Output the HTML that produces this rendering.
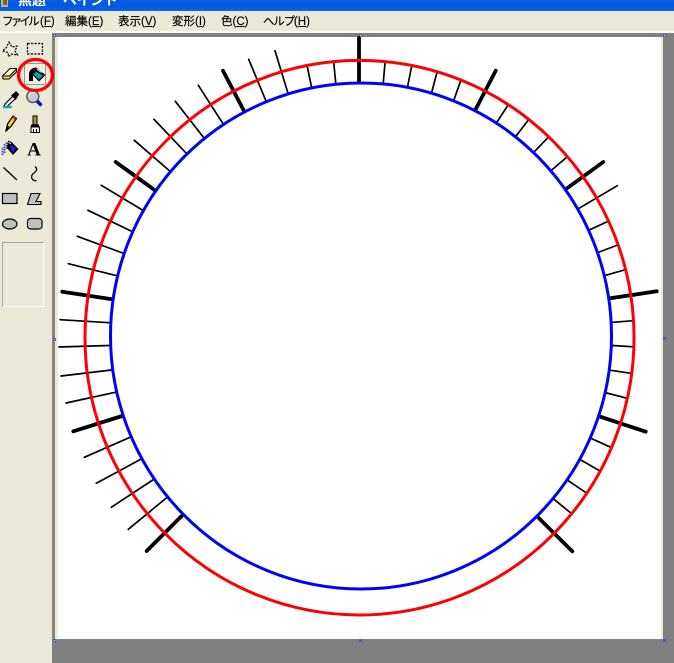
<!DOCTYPE html>
<html>
<head>
<meta charset="utf-8">
<style>
html,body{margin:0;padding:0;width:674px;height:663px;overflow:hidden;background:#808080}
#title{position:absolute;left:0;top:0;width:674px;height:11px;background:linear-gradient(#0a5be6,#0058e0 60%,#0a66f0);overflow:hidden}
#title span{position:absolute;top:-9px;color:#fff;font:bold 14px "Liberation Sans","Noto Sans CJK JP",sans-serif;line-height:18px;white-space:nowrap}
#menu{position:absolute;left:0;top:11px;width:674px;height:20px;background:#ece9d8}
#menu span{position:absolute;top:3.500px;font:11.500px/14px "Liberation Sans","Noto Sans CJK JP",sans-serif;color:#000;white-space:nowrap;-webkit-text-stroke:.15px #000}
#menu u{text-decoration:underline}
#sep{position:absolute;left:0;top:31px;width:674px;height:2px;background:#fbfaf5}
#tool{position:absolute;left:0;top:33px;width:52px;height:630px;background:#ece9d8}
#work{position:absolute;left:52px;top:33px;width:622px;height:630px;background:#808080}
#leftb{position:absolute;left:52px;top:33px;width:3px;height:606px;background:#868478}
#leftc{position:absolute;left:55px;top:37px;width:3px;height:602px;background:#ece9d8}
#canvas{position:absolute;left:58px;top:37px;width:603px;height:602px;background:#fff}
#rightc{position:absolute;left:661px;top:37px;width:2px;height:602px;background:#ece9d8}
.h{position:absolute;width:3px;height:3px;background:#fff;border:1px solid #316ac5;box-sizing:border-box}
.hb{background:#316ac5}
#opt{position:absolute;left:2px;top:242px;width:42px;height:65px;box-sizing:border-box;border:1px solid;border-color:#aca899 #fff #fff #aca899}
#btn{position:absolute;left:24px;top:63px;width:22px;height:22px;box-sizing:border-box;border:1px solid;border-color:#7f9db9;background:#f1efe4}
svg{position:absolute;left:0;top:0}
</style>
</head>
<body>
<div id="title">
<svg width="12" height="11"><rect x="1" y="0" width="7" height="7" fill="#c9b26a"/><rect x="3" y="0" width="2" height="5" fill="#3a8a3a"/><rect x="5" y="0" width="2" height="5" fill="#c23a2a"/></svg>
<span style="left:18px">無題</span><span style="left:63px;letter-spacing:-.4px">ペイント</span>
</div>
<div id="menu">
<span style="left:2px"><b style="font-weight:normal;letter-spacing:-2.800px">ファイル</b>&nbsp;(<u>F</u>)</span>
<span style="left:65px">編集(<u>E</u>)</span>
<span style="left:118px">表示(<u>V</u>)</span>
<span style="left:172px">変形(<u>I</u>)</span>
<span style="left:221px">色(<u>C</u>)</span>
<span style="left:263px"><b style="font-weight:normal;letter-spacing:-1.200px">ヘルプ</b>(<u>H</u>)</span>
</div>
<div id="sep"></div>
<div id="tool"></div>
<div id="work"></div>
<div id="leftb"></div>
<div id="leftc"></div>
<div id="canvas"></div>
<div id="rightc"></div>
<div class="h" style="left:53px;top:34px"></div>
<div class="h" style="left:359px;top:34px"></div>
<div class="h" style="left:663px;top:34px"></div>
<div class="h" style="left:53px;top:338px"></div>
<div class="h hb" style="left:663px;top:337px"></div>
<div class="h" style="left:53px;top:639px"></div>
<div class="h hb" style="left:359px;top:639px"></div>
<div class="h hb" style="left:663px;top:639px"></div>
<div id="opt"></div>
<div id="btn"></div>

<svg width="674" height="663" viewBox="0 0 674 663">
<!-- tool icons -->
<path d="M9 42L12 47L17 46L15 51L17.500 55L12 54L8.500 56.500L8 52.500L2.500 51L6.500 47.500Z" fill="none" stroke="#000" stroke-width="1.200" stroke-dasharray="2 1.200"/>
<rect x="27.500" y="43.500" width="15" height="10.500" fill="none" stroke="#000" stroke-width="1.200" stroke-dasharray="2.200 1.300"/>
<path d="M2.500 76L10 68.500H16.500V72L9 79H3Z" fill="#f7f3c8"/>
<path d="M3 79L3 76H9.500L16.500 69V72L9 79Z" fill="#e8dc60"/>
<path d="M2.500 76L10 68.500H16.500V72L9 79H3ZM3 76H9.500L16.500 69" fill="none" stroke="#000"/>
<path d="M29 81V74C29 70.500 32 68 35.500 67.500L38 69.500L33 73V81Z" fill="#000"/>
<path d="M36 67.500L45.500 75L39 81.500L31.500 74Z" fill="#000"/>
<path d="M36 71.500L43 75.500L39 79.500L33.500 74.500Z" fill="#0aa0a8"/>
<path d="M37 69.500L41.500 72.500" stroke="#fff" stroke-width="1"/>
<path d="M5 104L13 96L15.500 98.500L7 106.500H4Z" fill="#fff" stroke="#000" stroke-width="1.200"/>
<path d="M12 95.500L16 92L18.500 94.500L15.500 99Z" fill="#000" stroke="#000" stroke-width="1.200"/>
<path d="M3 107H11.500" stroke="#00b0b8" stroke-width="2.500"/>
<circle cx="32.800" cy="96.500" r="6" fill="#c4ccd0" stroke="#555" stroke-width="1.400"/>
<path d="M29.500 94.500C30.500 92.500 32 92 34 92.500" stroke="#fff" fill="none" stroke-width="1.200"/>
<path d="M37 101L41.500 105.500" stroke="#1010c0" stroke-width="3.500"/>
<path d="M6 131L7.500 124L13 116L16.500 118.500L11 126.500Z" fill="#f0d040" stroke="#000" stroke-width="1.200"/>
<path d="M12.500 117L15.500 119" stroke="#d03030" stroke-width="2"/>
<path d="M6.500 130.500L8 126" stroke="#000" stroke-width="2.200"/>
<rect x="33" y="116" width="4" height="8.500" fill="#a89820" stroke="#000"/>
<rect x="31" y="124.500" width="8" height="2.500" fill="#000"/>
<path d="M31 127H39.500V132.500H31Z" fill="#fff" stroke="#000"/>
<path d="M33.500 129V132.500M36.500 129V132.500" stroke="#000"/>
<path d="M2.500 155V147M4.500 153V144M6.500 149V142" stroke="#3030d0" stroke-width="1.700" stroke-dasharray="1.500 1"/>
<path d="M8 140.500L11.500 142L18.500 149L13 155L7 148Z" fill="#000"/>
<path d="M9.500 146.500L13 145.500L16 149L13 152.500Z" fill="#1020e0"/>
<path d="M8.500 142L11 144" stroke="#fff"/>
<text x="34" y="155.500" text-anchor="middle" font-family="Liberation Serif" font-weight="bold" font-size="19" fill="#000">A</text>
<path d="M3.500 167.500L17 180" stroke="#000" stroke-width="1.300" fill="none"/>
<path d="M35 166.500C38 169 36.500 171 34 173C31 175 31 178 33 180C34 180.500 35 181 36.500 180.500" stroke="#000" stroke-width="1.300" fill="none"/>
<rect x="2.500" y="193.500" width="14.500" height="10" fill="#c0c0c0" stroke="#000" stroke-width="1.200"/>
<path d="M31 193.500H40L36 201.500H41V204.500H27.500Z" fill="#c0c0c0" stroke="#000" stroke-width="1.100"/>
<ellipse cx="9.750" cy="224" rx="7.250" ry="5" fill="#c0c0c0" stroke="#000" stroke-width="1.200"/>
<rect x="27.500" y="218.500" width="14.500" height="10.500" rx="3" fill="#c0c0c0" stroke="#000" stroke-width="1.200"/>

<!-- red highlight ring -->
<ellipse cx="35.500" cy="75" rx="17" ry="15.500" fill="none" stroke="#f00" stroke-width="3.300"/>

<!-- drawing -->
<g stroke="#000" stroke-linecap="round" fill="none">
<g stroke-width="1.700">
<path d="M333.700 62.300L335.700 82.700M307.300 66.700L311.300 86M275 50.700L287.700 92.300M248.700 59.300L265.700 100.300"/>
<path d="M198.300 85.300L223 123.700M175.300 101.300L204 138M154 119.300L186.700 153.700M134.300 140.300L169.700 171"/>
<path d="M101.300 185.300L142.300 210M88 210.300L131.700 231.300M77.300 236.300L122.700 253M68.300 263.700L116.700 275.700"/>
<path d="M60 319.700L109.300 322.700M59 347L109.300 345.500M61 376L111.300 370M66 403L115.300 392.300"/>
<path d="M84.300 457.300L130 437.300M96.300 483.300L140.700 459.300M111.300 507.300L152.700 480M128.300 529.300L166.300 498"/>
<path d="M385 62.700L383.300 82.700M411.700 66L407.700 86M437 72.300L431.700 92.300M460.700 80.700L454 99.700"/>
<path d="M507.700 105.700L497 122M528.300 120L516.300 135.700M548.300 137.300L534 152M567 157L551.700 170"/>
<path d="M617.300 185.700L579 208.300M608.700 221L590 229.700M617.700 245L599.300 252M625.300 269.700L605.700 275.300"/>
<path d="M633.300 320.700L612.700 322.300M633.500 346.800L612.900 345.500M631.300 373.300L610.700 370.300M627.300 398.300L606.700 393"/>
<path d="M611.700 447.700L591.700 438.700M600 471L581.300 460.300M587 493.300L568.700 481M572 514L554 499.300"/>
</g>
<g stroke-width="3.800">
<path d="M359 38L359 82.300M223 70.700L244 111M115.700 162L155 190.300M62.300 291.700L112 299.300"/>
<path d="M73.300 431.300L122 416M146.700 551L182.300 515.300"/>
<path d="M495.700 70.700L475.300 110M603.300 162L566 189M656.700 291.300L610 298.300"/>
<path d="M645.700 431.700L600.300 416.700M572.300 551.300L538 517.300"/>
</g>
</g>
<ellipse cx="359.500" cy="337.700" rx="274.500" ry="277.300" fill="none" stroke="#f00" stroke-width="3"/>
<ellipse cx="361" cy="336" rx="250.500" ry="253" fill="none" stroke="#00f" stroke-width="3"/>
</svg>
</body>
</html>
